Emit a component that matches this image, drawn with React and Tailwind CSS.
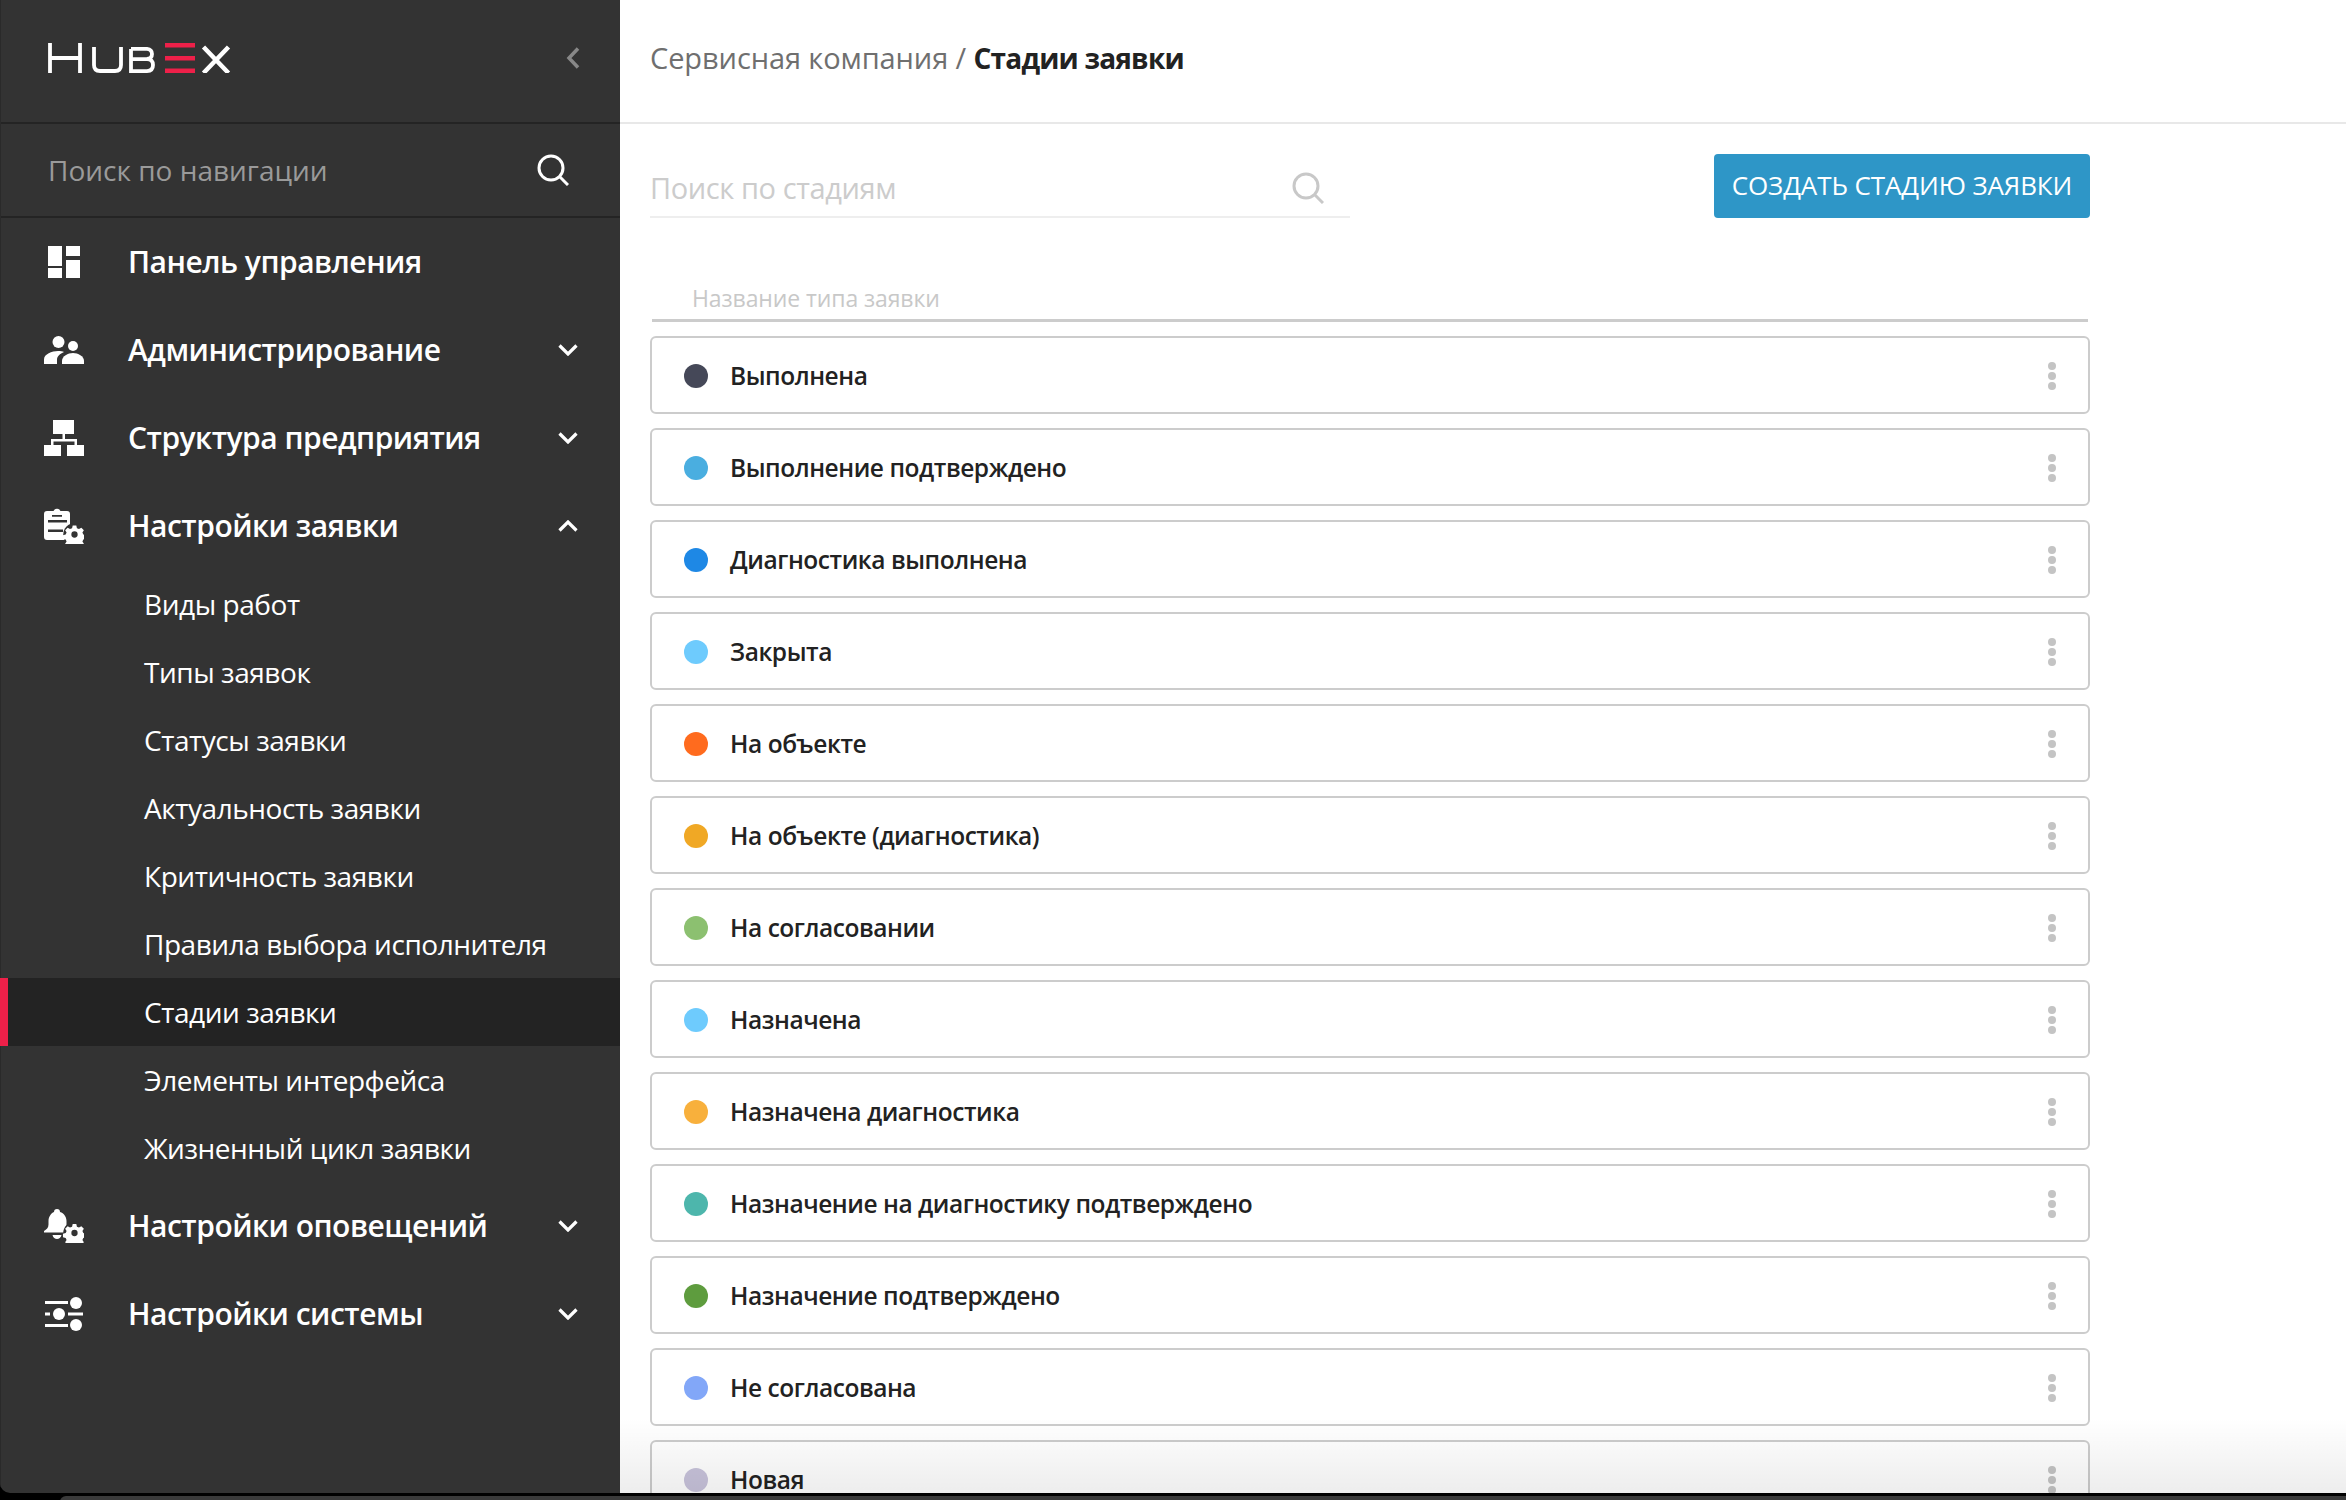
const F = "[font-family:'Open_Sans','Noto_Sans',sans-serif]";

const Logo = () => (
  <svg width="183" height="30" viewBox="0 0 183 30" role="img" aria-label="HubEx">
    <g fill="none" stroke="#fff" strokeWidth="3.800">
      <path d="M2 0v30M32 0v30M2 15h30" />
      <path d="M46 4v18q0 6 6 6h15q6 0 6-6V4" />
      <path d="M83 5.900v22.200h16q6 0 6-6t-6-6H83M99 16q5-.5 5-5t-5-5.100H83" />
      <path d="M155.500 4l25 26M180.500 4l-25 26" strokeWidth="4.500" />
    </g>
    <g fill="#ee2049">
      <rect x="117" width="30" height="4.500" />
      <rect x="117" y="13" width="30" height="4.500" />
      <rect x="117" y="25.500" width="30" height="4.500" />
    </g>
  </svg>
);

const SearchIcon = ({ c }) => (
  <svg width="32" height="32" viewBox="0 0 32 32" fill="none" stroke={c} strokeWidth="3">
    <circle cx="14" cy="14" r="12" />
    <path d="M22.500 22.500L31 31" />
  </svg>
);

const Chevron = ({ up }) => (
  <svg width="20" height="12" viewBox="0 0 20 12" fill="none" stroke="#fff" strokeWidth="3.200" className={up ? "rotate-180" : ""}>
    <path d="M1.500 1.500L10 10l8.500-8.500" />
  </svg>
);

const Gear = ({ x, y, r }) => (
  <g transform={`translate(${x} ${y}) scale(${r / 10})`}>
    <circle r="12.500" fill="#333333" />
    <path fillRule="evenodd" fill="#fff" d="M-2-10h4l.7 3 2.300 1 2.600-1.600 2.800 2.800-1.600 2.600 1 2.300 3 .7v4l-3 .7-1 2.300 1.600 2.600-2.800 2.800-2.600-1.600-2.300 1-.7 3h-4l-.7-3-2.300-1-2.600 1.600-2.800-2.800 1.600-2.600-1-2.300-3-.7v-4l3-.7 1-2.300-1.600-2.600 2.800-2.800 2.600 1.600 2.300-1zM0-3.500a3.500 3.500 0 1 0 0 7a3.500 3.500 0 1 0 0-7z" />
  </g>
);

const icons = {
  dash: (
    <svg width="40" height="32" viewBox="0 0 40 32" fill="#fff">
      <rect x="4" width="14" height="20" /><rect x="22" width="14" height="10" /><rect x="22" y="14" width="14" height="18" /><rect x="4" y="22" width="14" height="10" />
    </svg>
  ),
  people: (
    <svg width="40" height="28" viewBox="0 0 40 28" fill="#fff">
      <circle cx="14.500" cy="6" r="6" /><circle cx="29" cy="10" r="5" />
      <path d="M0 28v-4.500C0 18 8 15 14 15c2.500 0 4.500.4 6 1-4 2-7 4-7 8v4z" />
      <path d="M18 28v-3c0-5 6-8 11-8s11 3 11 8v3z" />
    </svg>
  ),
  org: (
    <svg width="40" height="36" viewBox="0 0 40 36" fill="#fff">
      <rect x="9" width="21" height="14" /><rect y="25" width="17" height="11" /><rect x="23" y="25" width="17" height="11" />
      <path d="M18.500 14h2.500v5h12v6h-2.500v-3.500H9.500V25H7v-6h11.500z" />
    </svg>
  ),
  clip: (
    <svg width="40" height="36" viewBox="0 0 40 36" fill="#fff">
      <path fillRule="evenodd" d="M3 3h6.500a3.800 3.800 0 0 1 7 0H23a3 3 0 0 1 3 3v26H3a3 3 0 0 1-3-3V6a3 3 0 0 1 3-3zM8 7v1.800h10V7zM4 12v2.500h19V12zm0 9.500V24h15v-2.500z" />
      <Gear x={30.500} y={26.500} r={9} />
    </svg>
  ),
  bell: (
    <svg width="40" height="34" viewBox="0 0 40 34" fill="#fff">
      <path d="M13 0c2 0 3 1.300 3 3 4 1.200 6.500 5 6.500 9v11.500H0v-1.500c2.500-1.500 4.500-3 4.500-6.500V12c0-4 2.500-7.800 5.500-9 0-1.700 1-3 3-3z" />
      <path d="M8.500 26h9c-.5 2.500-2.500 4-4.500 4s-4-1.500-4.500-4z" />
      <Gear x={30.500} y={24} r={9} />
    </svg>
  ),
  sliders: (
    <svg width="38" height="34" viewBox="0 0 38 34" fill="#fff">
      <rect x="0" y="4" width="23" height="3" /><circle cx="31" cy="6" r="6" />
      <rect x="0" y="15.500" width="5" height="3" /><circle cx="14" cy="17" r="6" /><rect x="23" y="15.500" width="15" height="3" />
      <rect x="0" y="27" width="23" height="3" /><circle cx="31" cy="28" r="6" />
    </svg>
  ),
};

const Row = ({ icon, label, chevron, up }) => (
  <div className="h-[88px] flex items-center pl-[43px] pr-[42px]">
    <span className="w-[40px] h-[40px] flex items-center justify-center">{icons[icon]}</span>
    <span className="ml-[44px] pb-[2px] text-[30px] font-semibold text-white flex-1 tracking-[-0.5px]">{label}</span>
    {chevron && <Chevron up={up} />}
  </div>
);

const subs = ["Виды работ", "Типы заявок", "Статусы заявки", "Актуальность заявки", "Критичность заявки", "Правила выбора исполнителя", "Стадии заявки", "Элементы интерфейса", "Жизненный цикл заявки"];

const stages = [
  ["Выполнена", "#454858"],
  ["Выполнение подтверждено", "#4aaee0"],
  ["Диагностика выполнена", "#1e88e5"],
  ["Закрыта", "#6ecbfd"],
  ["На объекте", "#ff6b1e"],
  ["На объекте (диагностика)", "#f0a825"],
  ["На согласовании", "#8cc070"],
  ["Назначена", "#6ecbfd"],
  ["Назначена диагностика", "#f8b03c"],
  ["Назначение на диагностику подтверждено", "#4db6ac"],
  ["Назначение подтверждено", "#5e9c3e"],
  ["Не согласована", "#82a7f8"],
  ["Новая", "#c8c3db"],
];

export default function App() {
  return (
    <div className={`w-[2346px] h-[1500px] bg-black overflow-hidden relative ${F}`}>
      <div className="h-[1493px] flex overflow-hidden rounded-bl-[10px]">
        <aside className="w-[620px] h-full bg-[#333333] shrink-0 border-l border-[#2a2a2a]">
          <div className="h-[124px] flex items-center justify-between pl-[47px] pr-[40px] border-b-2 border-[#242424] pb-[6px]">
            <Logo />
            <svg width="14" height="22" viewBox="0 0 14 22" fill="none" stroke="#888" strokeWidth="3.500"><path d="M12 1.500L3 11l9 9.500" /></svg>
          </div>
          <div className="h-[94px] flex items-center justify-between pl-[47px] pr-[51px] border-b-2 border-[#242424]">
            <span className="text-[28px] text-[#9a9a9a]">Поиск по навигации</span>
            <SearchIcon c="#fff" />
          </div>
          <Row icon="dash" label="Панель управления" />
          <Row icon="people" label="Администрирование" chevron />
          <Row icon="org" label="Структура предприятия" chevron />
          <Row icon="clip" label="Настройки заявки" chevron up />
          {subs.map((s) =>
            s === "Стадии заявки" ? (
              <div key={s} className="h-[68px] flex items-center text-[28px] text-white tracking-[-0.45px] bg-[#232323] border-l-[8px] border-[#ee2049] -ml-px pl-[136px]">
                {s}
              </div>
            ) : (
              <div key={s} className="h-[68px] flex items-center text-[28px] text-white tracking-[-0.45px] pl-[143px]">
                {s}
              </div>
            )
          )}
          <Row icon="bell" label="Настройки оповещений" chevron />
          <Row icon="sliders" label="Настройки системы" chevron />
        </aside>
        <main className="flex-1 h-full bg-white relative overflow-hidden">
          <div className="h-[124px] border-b-2 border-[#e8e8e8] flex items-center pl-[30px] pb-[6px] text-[29px]">
            <span className="text-[#6f6f6f] font-medium tracking-[-0.1px]">Сервисная компания /&nbsp;</span>
            <span className="text-[#222222] font-bold text-[28px] tracking-[-0.8px]">Стадии заявки</span>
          </div>
          <div className="pl-[30px] w-[1470px]">
            <div className="h-[96px] flex justify-between items-start pt-[30px]">
              <div className="w-[700px] h-[64px] border-b-2 border-[#eeeeee] flex items-center justify-between pr-[26px] pt-[5px]">
                <span className="text-[29px] text-[#cccccc] tracking-[-0.4px]">Поиск по стадиям</span>
                <SearchIcon c="#c8c8c8" />
              </div>
              <button className="w-[376px] h-[64px] bg-[#2e96c7] rounded-[4px] text-white text-[26px] tracking-[-0.1px] pb-[2px] whitespace-nowrap">СОЗДАТЬ СТАДИЮ ЗАЯВКИ</button>
            </div>
            <div className="ml-[2px] w-[1436px] h-[48px] pt-[4px] border-b-[3px] border-[#cccccc] pl-[40px] text-[23px] tracking-[-0.1px] text-[#c8c8c8] flex items-center mt-[54px]">Название типа заявки</div>
            <div className="mt-[14px] flex flex-col gap-[14px]">
              {stages.map(([name, color]) => (
                <div key={name} className="h-[78px] shrink-0 border-2 border-[#cccccc] rounded-[6px] flex items-center pl-[32px] pr-[32px] pt-[2px]">
                  <span className="w-[24px] h-[24px] rounded-full" style={{ backgroundColor: color }} />
                  <span className="ml-[22px] text-[24.5px] font-semibold text-[#222222] flex-1 tracking-[-0.45px]">{name}</span>
                  <span className="flex flex-col gap-[2px]">
                    <i className="block w-[8px] h-[8px] rounded-full bg-[#c4c4c4]" />
                    <i className="block w-[8px] h-[8px] rounded-full bg-[#c4c4c4]" />
                    <i className="block w-[8px] h-[8px] rounded-full bg-[#c4c4c4]" />
                  </span>
                </div>
              ))}
            </div>
          </div>
          <div className="absolute left-0 right-0 bottom-0 h-[75px] bg-gradient-to-b from-[#00000000] to-[#00000012]" />
        </main>
      </div>
      <div className="h-[7px] ml-[60px] mt-[3px] bg-[#3a3a3a] rounded-tl-[6px]" />
    </div>
  );
}
